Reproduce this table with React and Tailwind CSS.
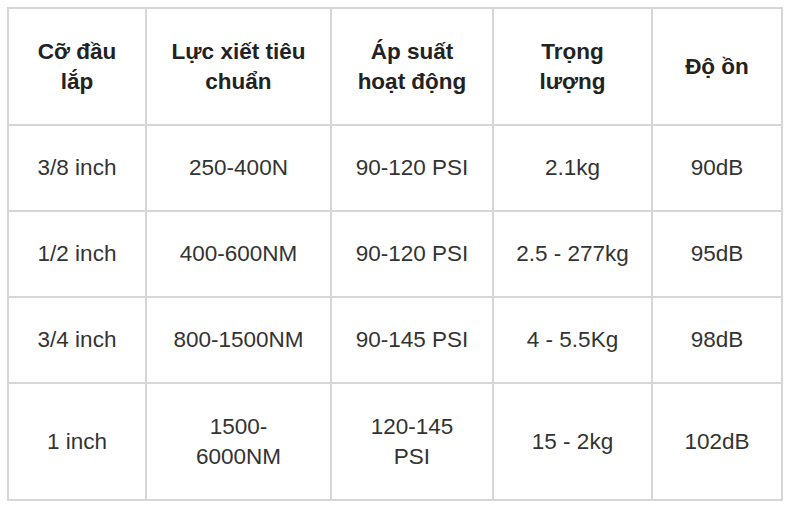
export default function App() {
  const head = ["Cỡ đầu lắp", "Lực xiết tiêu chuẩn", "Áp suất hoạt động", "Trọng lượng", "Độ ồn"];
  const rows = [
    ["3/8 inch", "250-400N", "90-120 PSI", "2.1kg", "90dB"],
    ["1/2 inch", "400-600NM", "90-120 PSI", "2.5 - 277kg", "95dB"],
    ["3/4 inch", "800-1500NM", "90-145 PSI", "4 - 5.5Kg", "98dB"],
    ["1 inch", "1500-6000NM", "120-145 PSI", "15 - 2kg", "102dB"],
  ];
  const widths = ["w-[138px]", "w-[185px]", "w-[162px]", "w-[159px]", "w-[130px]"];
  return (
    <div className="bg-white w-[788px] h-[505px] pt-[7px] pl-[7px]" style={{ fontFamily: '"Liberation Sans", Arial, sans-serif' }}>
      <table className="table-fixed border-separate border-spacing-0 border-t-2 border-l-2 border-[#d6d6d6] w-[776px] text-[22.5px] leading-[30px]">
        <colgroup>
          {widths.map((w, i) => (
            <col key={i} className={w} />
          ))}
        </colgroup>
        <thead>
          <tr>
            {head.map((h, i) => (
              <th key={i} className="h-[117px] px-[22px] py-0 border-r-2 border-b-2 border-[#d6d6d6] text-center align-middle font-bold text-[#222]">
                {h}
              </th>
            ))}
          </tr>
        </thead>
        <tbody>
          {rows.map((r, ri) => (
            <tr key={ri}>
              {r.map((c, ci) => (
                <td key={ci} className={(ri === 3 ? "h-[117px]" : "h-[86px]") + " px-[22px] py-0 border-r-2 border-b-2 border-[#d6d6d6] text-center align-middle text-[#333]"}>
                  {c}
                </td>
              ))}
            </tr>
          ))}
        </tbody>
      </table>
    </div>
  );
}
